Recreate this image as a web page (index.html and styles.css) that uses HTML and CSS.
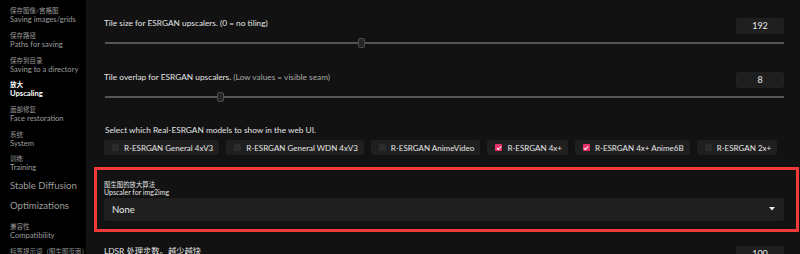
FILE: index.html
```html
<!DOCTYPE html>
<html lang="zh">
<head>
<meta charset="utf-8">
<title>Upscaling settings</title>
<link rel="stylesheet" href="styles.css">
</head>
<body>
<div class="app">
  <nav class="side">
    <div class="item"><span class="cn">保存图像/宫格图</span><span class="en">Saving images/grids</span></div>
    <div class="item"><span class="cn">保存路径</span><span class="en">Paths for saving</span></div>
    <div class="item"><span class="cn">保存到目录</span><span class="en">Saving to a directory</span></div>
    <div class="item active"><span class="cn">放大</span><span class="en">Upscaling</span></div>
    <div class="item"><span class="cn">面部修复</span><span class="en">Face restoration</span></div>
    <div class="item"><span class="cn">系统</span><span class="en">System</span></div>
    <div class="item"><span class="cn">训练</span><span class="en">Training</span></div>
    <div class="item single">Stable Diffusion</div>
    <div class="item single">Optimizations</div>
    <div class="item compat"><span class="cn">兼容性</span><span class="en">Compatibility</span></div>
    <div class="item"><span class="cn">标签提示词（图生图页面）</span></div>
  </nav>
  <main class="panel">
    <section class="setting first">
      <div class="row">
        <span class="label">Tile size for ESRGAN upscalers. (0 = no tiling)</span>
        <span class="num">192</span>
      </div>
      <div class="slider"><div class="track"></div><div class="thumb" style="left: 37.3%"></div></div>
    </section>
    <section class="setting second">
      <div class="row">
        <span class="label">Tile overlap for ESRGAN upscalers. <span class="muted">(Low values = visible seam)</span></span>
        <span class="num">8</span>
      </div>
      <div class="slider"><div class="track"></div><div class="thumb" style="left: 16.6%"></div></div>
    </section>
    <section class="setting models">
      <div class="label">Select which Real-ESRGAN models to show in the web UI.</div>
      <div class="chips">
        <label class="chip"><span class="box"></span>R-ESRGAN General 4xV3</label>
        <label class="chip"><span class="box"></span>R-ESRGAN General WDN 4xV3</label>
        <label class="chip"><span class="box"></span>R-ESRGAN AnimeVideo</label>
        <label class="chip"><span class="box checked"><svg viewBox="0 0 8 8" width="6" height="6"><path d="M1.2 4.2 L3.2 6 L6.8 2" fill="none" stroke="#fff" stroke-width="1.4"/></svg></span>R-ESRGAN 4x+</label>
        <label class="chip"><span class="box checked"><svg viewBox="0 0 8 8" width="6" height="6"><path d="M1.2 4.2 L3.2 6 L6.8 2" fill="none" stroke="#fff" stroke-width="1.4"/></svg></span>R-ESRGAN 4x+ Anime6B</label>
        <label class="chip"><span class="box"></span>R-ESRGAN 2x+</label>
      </div>
    </section>
    <section class="highlight">
      <div class="small cn2">图生图的放大算法</div>
      <div class="small">Upscaler for img2img</div>
      <div class="select">
        <span>None</span>
        <svg class="arrow" viewBox="0 0 6 4" width="6" height="4"><path d="M0 0 H6 L3 3.5 Z" fill="#e8e8e8"/></svg>
      </div>
    </section>
    <section class="setting ldsr">
      <div class="row">
        <span class="label">LDSR 处理步数。越少越快</span>
        <span class="num">100</span>
      </div>
    </section>
  </main>
</div>
</body>
</html>
```

FILE: styles.css
```css
html, body {
  margin: 0;
  padding: 0;
  background: #000;
  height: 254px;
  overflow: hidden;
}
body {
  font-family: Lato, "Noto Sans CJK SC", sans-serif;
  color: #e6e6e6;
}
.app {
  display: flex;
  height: 254px;
}
.side {
  width: 76px;
  padding: 3px 0 0 10px;
  overflow: hidden;
  flex: none;
  color: #9c9c9c;
}
.item {
  padding: 4.35px 0;
  display: flex;
  flex-direction: column;
  white-space: nowrap;
}
.item .cn {
  font-size: 6.5px;
  line-height: 8px;
}
.item .en {
  font-size: 7.6px;
  line-height: 8px;
}
.item.active {
  color: #fff;
  font-weight: 700;
}
.item.single {
  font-size: 9.6px;
  line-height: 10px;
  padding: 5px 0;
}
.item.compat {
  margin-top: 3px;
}
.panel {
  flex: 1;
  background: #121212;
  padding: 0 16px 0 18px;
  overflow: hidden;
}
.row {
  display: flex;
  justify-content: space-between;
  align-items: flex-start;
}
.label {
  font-size: 8.3px;
  line-height: 11px;
  color: #e4e4e4;
}
.muted {
  color: #a8a8a8;
}
.num {
  width: 48px;
  height: 16px;
  line-height: 16px;
  background: #1f1f1f;
  border-radius: 3px;
  text-align: center;
  font-size: 9px;
  color: #e8e8e8;
}
.first { padding-top: 18px; }
.second { padding-top: 24px; }
.slider {
  position: relative;
  height: 10px;
  margin-top: 4px;
}
.track {
  position: absolute;
  left: 1px;
  right: 0;
  top: 4px;
  height: 2px;
  background: #555;
}
.thumb {
  position: absolute;
  top: 0;
  width: 5px;
  height: 8px;
  background: #262626;
  border: 1px solid #4a4a4a;
  border-radius: 2px;
}
.models { padding-top: 23px; }
.models .label { line-height: 10px; padding-left: 1px; }
.chips {
  display: flex;
  gap: 7px;
  margin-top: 5px;
}
.chip {
  display: flex;
  align-items: center;
  height: 15px;
  padding: 0 6px 0 8px;
  background: #1f1f1f;
  border-radius: 3px;
  font-size: 8px;
  color: #e4e4e4;
  white-space: nowrap;
}
.box {
  width: 7px;
  height: 7px;
  background: #2c2c2c;
  border-radius: 1px;
  margin-right: 5px;
  display: flex;
  align-items: center;
  justify-content: center;
}
.box.checked {
  background: #e8336d;
}
.highlight {
  margin: 12px -15px 0 -10px;
  border: 3px solid #f33a3a;
  padding: 11px 12px 8px 7px;
}
.small {
  font-size: 7px;
  line-height: 7.5px;
  color: #e4e4e4;
}
.small.cn2 {
  font-size: 6.4px;
}
.select {
  margin-top: 1.5px;
  height: 23px;
  background: #1f1f1f;
  border-radius: 3px;
  display: flex;
  align-items: center;
  justify-content: space-between;
  padding: 0 9px 0 8px;
  font-size: 9.5px;
  color: #e8e8e8;
}
.arrow { display: block; }
.ldsr { padding-top: 14px; }
```
